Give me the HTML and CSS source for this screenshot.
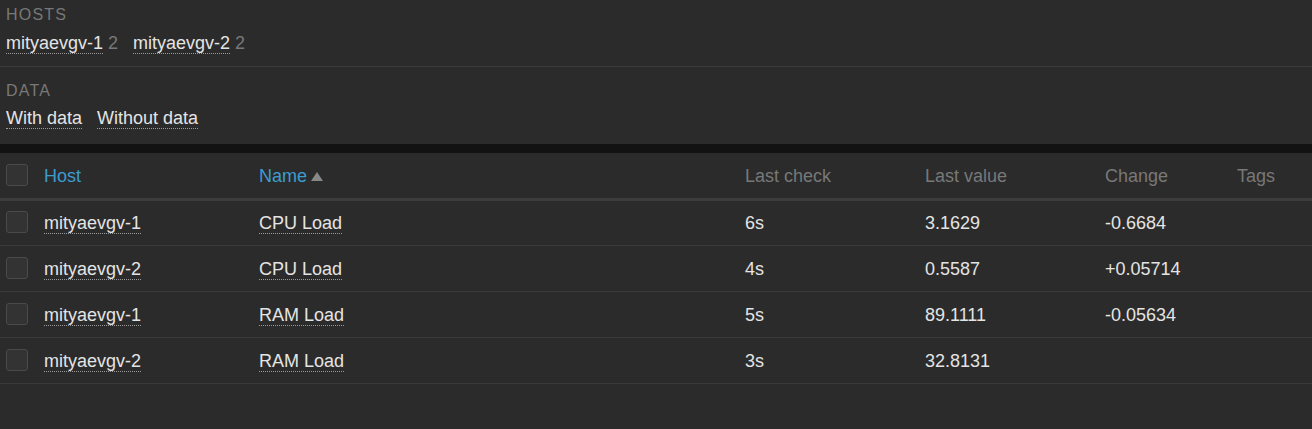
FILE: index.html
```html
<!DOCTYPE html>
<html>
<head>
<meta charset="utf-8">
<link rel="stylesheet" href="styles.css">
</head>
<body>
<div class="filters">
  <div class="group">
    <div class="label">HOSTS</div>
    <div class="links">
      <span class="item"><span class="link">mityaevgv-1</span> <span class="count">2</span></span>
      <span class="item"><span class="link">mityaevgv-2</span> <span class="count">2</span></span>
    </div>
  </div>
  <div class="group last">
    <div class="label">DATA</div>
    <div class="links">
      <span class="item"><span class="link">With data</span></span>
      <span class="item"><span class="link">Without data</span></span>
    </div>
  </div>
</div>
<div class="band"></div>
<table class="grid">
  <colgroup>
    <col class="c-check"><col class="c-host"><col class="c-name"><col class="c-last"><col class="c-value"><col class="c-change"><col class="c-tags">
  </colgroup>
  <thead>
    <tr>
      <th><span class="box"></span></th>
      <th class="sort">Host</th>
      <th class="sort">Name <span class="arrow"></span></th>
      <th>Last check</th>
      <th>Last value</th>
      <th>Change</th>
      <th>Tags</th>
    </tr>
  </thead>
  <tbody>
    <tr>
      <td><span class="box"></span></td>
      <td><span class="link">mityaevgv-1</span></td>
      <td><span class="link">CPU Load</span></td>
      <td>6s</td><td>3.1629</td><td>-0.6684</td><td></td>
    </tr>
    <tr>
      <td><span class="box"></span></td>
      <td><span class="link">mityaevgv-2</span></td>
      <td><span class="link">CPU Load</span></td>
      <td>4s</td><td>0.5587</td><td>+0.05714</td><td></td>
    </tr>
    <tr>
      <td><span class="box"></span></td>
      <td><span class="link">mityaevgv-1</span></td>
      <td><span class="link">RAM Load</span></td>
      <td>5s</td><td>89.1111</td><td>-0.05634</td><td></td>
    </tr>
    <tr>
      <td><span class="box"></span></td>
      <td><span class="link">mityaevgv-2</span></td>
      <td><span class="link">RAM Load</span></td>
      <td>3s</td><td>32.8131</td><td></td><td></td>
    </tr>
  </tbody>
</table>
</body>
</html>
```
FILE: styles.css
```css
html, body {
  margin: 0;
  padding: 0;
  background: #2b2b2b;
  font-family: "Liberation Sans", Arial, sans-serif;
  color: #e4e4e4;
  font-size: 18px;
}
.group {
  height: 67px;
  border-bottom: 1px solid #3b3b3b;
  padding: 0 6px;
  box-sizing: border-box;
}
.group.last {
  height: 77px;
  border-bottom: none;
  padding-top: 9px;
}
.label {
  color: #787878;
  font-size: 16px;
  letter-spacing: 1.2px;
  line-height: 18px;
  padding-top: 6px;
}
.links {
  display: flex;
  gap: 15px;
  margin-top: 9px;
  line-height: 20px;
}
.group.last .links {
  margin-top: 8px;
}
.link {
  border-bottom: 1px dotted #9a9a9a;
}
.count {
  color: #787878;
}
.band {
  height: 9px;
  background: #121212;
}
.grid {
  width: 1312px;
  border-collapse: collapse;
  table-layout: fixed;
}
.c-check { width: 44px; }
.c-host { width: 215px; }
.c-name { width: 486px; }
.c-last { width: 180px; }
.c-value { width: 180px; }
.c-change { width: 132px; }
.c-tags { width: 75px; }
th, td {
  padding: 0;
  text-align: left;
  font-weight: normal;
  vertical-align: middle;
  box-sizing: border-box;
}
th {
  height: 46px;
  padding-top: 2px;
  color: #787878;
  border-bottom: 3px solid #3d3d3d;
}
th.sort {
  color: #3d9bd0;
}
td {
  height: 46px;
  padding-top: 2px;
  border-bottom: 1px solid #3a3a3a;
}
th:first-child, td:first-child {
  padding-top: 0;
}
.box {
  display: block;
  width: 20px;
  height: 20px;
  margin-left: 6px;
  border: 1px solid #4a4a4a;
  border-radius: 3px;
  background: #333333;
}
td .box {
  margin-top: -1px;
}
.arrow {
  display: inline-block;
  width: 0;
  height: 0;
  border-left: 6px solid transparent;
  border-right: 6px solid transparent;
  border-bottom: 9px solid #888888;
  margin-left: -1px;
  vertical-align: 1px;
}
```
